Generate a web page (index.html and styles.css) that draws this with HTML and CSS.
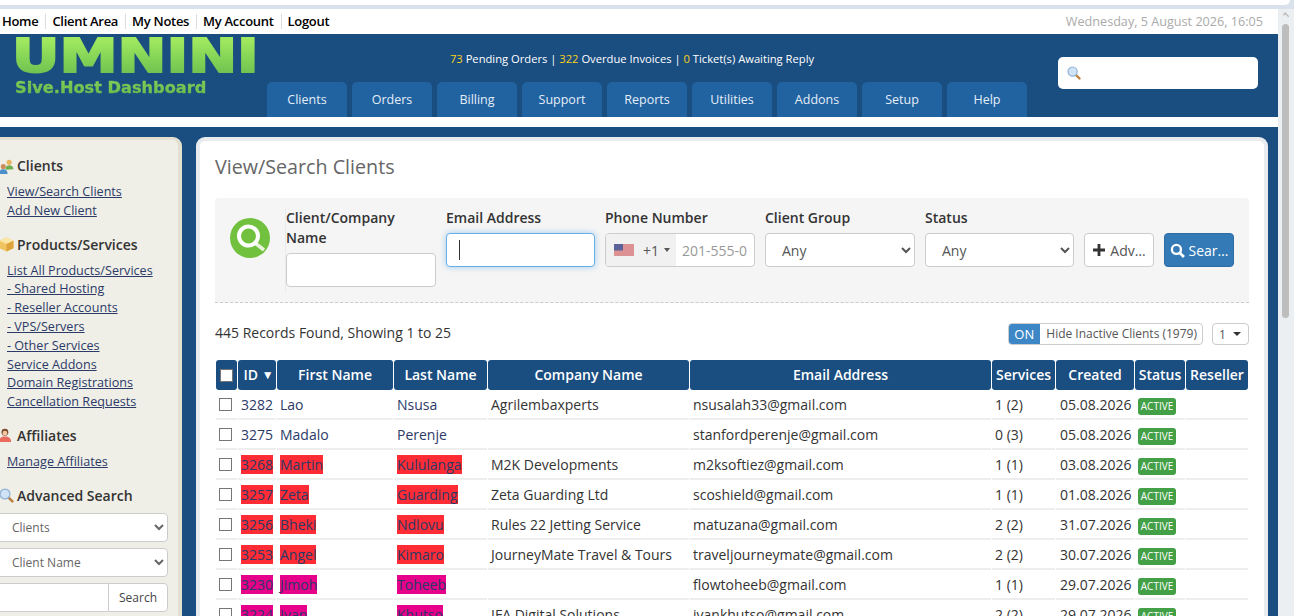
FILE: index.html
```html
<!DOCTYPE html>
<html lang="en">
<head>
  <meta charset="UTF-8">
  <title>View/Search Clients</title>
  <link rel="stylesheet" href="styles.css">
</head>
<body>

<div class="top-edge"><div class="top-edge-inner"></div></div>

<div class="window">
  <div class="page">

    <div class="topbar">
      <div class="topnav">
        <a href="#">Home</a>
        <a href="#">Client Area</a>
        <a href="#">My Notes</a>
        <a href="#">My Account</a>
        <a href="#">Logout</a>
      </div>
      <div class="date">Wednesday, 5 August 2026, 16:05</div>
    </div>

    <div class="header">
      <div class="logo">
        <div class="logo-big">UMNINI</div>
        <div class="logo-small">Sive.Host Dashboard</div>
      </div>
      <div class="head-mid">
        <div class="stats">
          <b>73</b> Pending Orders | <b>322</b> Overdue Invoices | <b>0</b> Ticket(s) Awaiting Reply
        </div>
        <div class="tabs">
          <a class="tab" href="#">Clients</a>
          <a class="tab" href="#">Orders</a>
          <a class="tab" href="#">Billing</a>
          <a class="tab" href="#">Support</a>
          <a class="tab" href="#">Reports</a>
          <a class="tab" href="#">Utilities</a>
          <a class="tab" href="#">Addons</a>
          <a class="tab" href="#">Setup</a>
          <a class="tab" href="#">Help</a>
        </div>
      </div>
      <div class="head-search">
        <svg class="icon-mag" viewBox="0 0 14 14">
          <path d="M8.5 8.5l4 4" stroke="#b9803f" stroke-width="2.4" stroke-linecap="round"/>
          <circle cx="5.6" cy="5.6" r="4.6" fill="#cfe2f6" stroke="#8fb2d6" stroke-width="1.2"/>
        </svg>
      </div>
    </div>

    <div class="content">
      <div class="sidebar">
        <h3 class="side-head">
          <svg class="side-icon" viewBox="0 0 14 14">
            <circle cx="9.5" cy="3" r="2.4" fill="#e9b35f"/>
            <path d="M6 10c0-3 1.4-4.2 3.5-4.2S13.5 7 13.5 9.5z" fill="#6fae4e"/>
            <circle cx="4" cy="7" r="2.4" fill="#c98d5a"/>
            <path d="M.2 14c0-3 1.4-4.4 3.8-4.4S8 11 8 14z" fill="#4d8fc9"/>
          </svg>
          Clients
        </h3>
        <a class="side-link" href="#">View/Search Clients</a>
        <a class="side-link" href="#">Add New Client</a>

        <h3 class="side-head">
          <svg class="side-icon" viewBox="0 0 14 14">
            <path d="M7 .5l6.500 3v7L7 13.500.5 10.500v-7z" fill="#f0c45e"/>
            <path d="M7 .5l6.500 3L7 6.500.5 3.500z" fill="#fbe6a6"/>
            <path d="M7 6.500v7l6.500-3v-7z" fill="#dfa33c"/>
          </svg>
          Products/Services
        </h3>
        <a class="side-link" href="#">List All Products/Services</a>
        <a class="side-link" href="#">- Shared Hosting</a>
        <a class="side-link" href="#">- Reseller Accounts</a>
        <a class="side-link" href="#">- VPS/Servers</a>
        <a class="side-link" href="#">- Other Services</a>
        <a class="side-link" href="#">Service Addons</a>
        <a class="side-link" href="#">Domain Registrations</a>
        <a class="side-link" href="#">Cancellation Requests</a>

        <h3 class="side-head">
          <svg class="side-icon" viewBox="0 0 14 14">
            <circle cx="5.500" cy="4" r="3.200" fill="#7a4a2a"/>
            <circle cx="5.500" cy="4.800" r="2.200" fill="#f2c6a0"/>
            <path d="M0 13c0-3.500 2-5 5.500-5s5.800 1.500 5.800 5z" fill="#ea6a5e"/>
          </svg>
          Affiliates
        </h3>
        <a class="side-link" href="#">Manage Affiliates</a>

        <h3 class="side-head">
          <svg class="side-icon" viewBox="0 0 14 14">
            <path d="M8.500 8.500l4 4" stroke="#b9803f" stroke-width="2.400" stroke-linecap="round"/>
            <circle cx="5.600" cy="5.600" r="4.600" fill="#cfe2f6" stroke="#8fb2d6" stroke-width="1.200"/>
          </svg>
          Advanced Search
        </h3>
        <div class="side-form">
          <select class="side-select"><option>Clients</option></select>
          <select class="side-select"><option>Client Name</option></select>
          <div class="side-group">
            <input class="side-input" type="text">
            <button class="side-btn">Search</button>
          </div>
        </div>
      </div>

      <div class="main">
        <h1 class="title">View/Search Clients</h1>

        <div class="filters">
          <div class="filter-icon">
            <svg viewBox="0 0 40 40" width="40" height="40">
              <circle cx="20" cy="20" r="20" fill="#72c13e"/>
              <path d="M25 25l9 7" stroke="#e8f5dc" stroke-width="3.500"/>
              <circle cx="18.500" cy="18" r="9.500" fill="#72c13e" stroke="#fff" stroke-width="4"/>
            </svg>
          </div>
          <div class="filter-fields">
            <div class="field">
              <label>Client/Company Name</label>
              <input class="control" type="text">
            </div>
            <div class="field field-narrow">
              <label>Email Address</label>
              <div class="focus-wrap">
                <input class="control focused" type="text">
                <span class="caret"></span>
              </div>
            </div>
            <div class="field">
              <label>Phone Number</label>
              <div class="phone">
                <div class="phone-code">
                  <svg class="flag" viewBox="0 0 20 12">
                    <rect width="20" height="12" fill="#e8b9b9"/>
                    <path d="M0 1h20M0 3h20M0 5h20M0 7h20M0 9h20M0 11h20" stroke="#cf6a6f" stroke-width="1"/>
                    <rect width="9" height="6.500" fill="#5a6299"/>
                  </svg>
                  <span>+1</span>
                  <i class="phone-arrow"></i>
                </div>
                <input class="phone-input" type="text" placeholder="201-555-0123">
              </div>
            </div>
            <div class="field">
              <label>Client Group</label>
              <select class="control"><option>Any</option></select>
            </div>
            <div class="field field-narrow">
              <label>Status</label>
              <select class="control"><option>Any</option></select>
            </div>
            <button class="btn">
              <svg viewBox="0 0 14 14" width="14" height="14"><path d="M7 1v12M1 7h12" stroke="#333" stroke-width="2.800"/></svg>
              Adv…
            </button>
            <button class="btn btn-primary">
              <svg viewBox="0 0 14 14" width="15" height="15">
                <circle cx="6" cy="6" r="4.200" fill="none" stroke="#fff" stroke-width="2.200"/>
                <path d="M9 9l4 4" stroke="#fff" stroke-width="2.600"/>
              </svg>
              Sear…
            </button>
          </div>
        </div>

        <div class="results-bar">
          <div class="results-count">445 Records Found, Showing 1 to 25</div>
          <div class="toggle"><span class="toggle-on">ON</span><span class="toggle-label">Hide Inactive Clients (1979)</span></div>
          <div class="pager">1 <i class="pager-arrow"></i></div>
        </div>

        <table class="clients">
          <colgroup>
            <col class="c-check"><col class="c-id"><col class="c-first"><col class="c-last"><col class="c-company">
            <col class="c-email"><col class="c-services"><col class="c-created"><col class="c-status"><col class="c-reseller">
          </colgroup>
          <thead>
            <tr>
              <th><input type="checkbox"></th>
              <th class="th-id">ID <span class="sort">▼</span></th>
              <th>First Name</th>
              <th>Last Name</th>
              <th>Company Name</th>
              <th>Email Address</th>
              <th>Services</th>
              <th>Created</th>
              <th>Status</th>
              <th>Reseller</th>
            </tr>
          </thead>
          <tbody>
            <tr>
              <td><input type="checkbox"></td>
              <td><a href="#">3282</a></td><td><a href="#">Lao</a></td><td><a href="#">Nsusa</a></td>
              <td>Agrilembaxperts</td><td><a class="mail" href="#">nsusalah33@gmail.com</a></td>
              <td>1 (2)</td><td class="created">05.08.2026</td><td><span class="badge">ACTIVE</span></td><td></td>
            </tr>
            <tr>
              <td><input type="checkbox"></td>
              <td><a href="#">3275</a></td><td><a href="#">Madalo</a></td><td><a href="#">Perenje</a></td>
              <td></td><td><a class="mail" href="#">stanfordperenje@gmail.com</a></td>
              <td>0 (3)</td><td class="created">05.08.2026</td><td><span class="badge">ACTIVE</span></td><td></td>
            </tr>
            <tr>
              <td><input type="checkbox"></td>
              <td><a class="flag-red" href="#">3268</a></td><td><a class="flag-red" href="#">Martin</a></td><td><a class="flag-red" href="#">Kululanga</a></td>
              <td>M2K Developments</td><td><a class="mail" href="#">m2ksoftiez@gmail.com</a></td>
              <td>1 (1)</td><td class="created">03.08.2026</td><td><span class="badge">ACTIVE</span></td><td></td>
            </tr>
            <tr>
              <td><input type="checkbox"></td>
              <td><a class="flag-red" href="#">3257</a></td><td><a class="flag-red" href="#">Zeta</a></td><td><a class="flag-red" href="#">Guarding</a></td>
              <td>Zeta Guarding Ltd</td><td><a class="mail" href="#">scoshield@gmail.com</a></td>
              <td>1 (1)</td><td class="created">01.08.2026</td><td><span class="badge">ACTIVE</span></td><td></td>
            </tr>
            <tr>
              <td><input type="checkbox"></td>
              <td><a class="flag-red" href="#">3256</a></td><td><a class="flag-red" href="#">Bheki</a></td><td><a class="flag-red" href="#">Ndlovu</a></td>
              <td>Rules 22 Jetting Service</td><td><a class="mail" href="#">matuzana@gmail.com</a></td>
              <td>2 (2)</td><td class="created">31.07.2026</td><td><span class="badge">ACTIVE</span></td><td></td>
            </tr>
            <tr>
              <td><input type="checkbox"></td>
              <td><a class="flag-red" href="#">3253</a></td><td><a class="flag-red" href="#">Angel</a></td><td><a class="flag-red" href="#">Kimaro</a></td>
              <td>JourneyMate Travel &amp; Tours</td><td><a class="mail" href="#">traveljourneymate@gmail.com</a></td>
              <td>2 (2)</td><td class="created">30.07.2026</td><td><span class="badge">ACTIVE</span></td><td></td>
            </tr>
            <tr>
              <td><input type="checkbox"></td>
              <td><a class="flag-pink" href="#">3230</a></td><td><a class="flag-pink" href="#">Jimoh</a></td><td><a class="flag-pink" href="#">Toheeb</a></td>
              <td></td><td><a class="mail" href="#">flowtoheeb@gmail.com</a></td>
              <td>1 (1)</td><td class="created">29.07.2026</td><td><span class="badge">ACTIVE</span></td><td></td>
            </tr>
            <tr>
              <td><input type="checkbox"></td>
              <td><a class="flag-pink" href="#">3224</a></td><td><a class="flag-pink" href="#">Ivan</a></td><td><a class="flag-pink" href="#">Khutso</a></td>
              <td>IFA Digital Solutions</td><td><a class="mail" href="#">ivankhutso@gmail.com</a></td>
              <td>2 (2)</td><td class="created">29.07.2026</td><td><span class="badge">ACTIVE</span></td><td></td>
            </tr>
          </tbody>
        </table>
      </div>
    </div>
  </div>

  <div class="scrollbar">
    <span class="scroll-up"></span>
    <div class="scroll-thumb"></div>
  </div>
</div>

</body>
</html>
```

FILE: styles.css
```css
* {
  box-sizing: border-box;
}

html, body {
  height: 100%;
  margin: 0;
  overflow: hidden;
}

body {
  font-family: "Open Sans", sans-serif;
  font-size: 14px;
  color: #333;
  background-color: #fff;
}

.top-edge {
  height: 9px;
  background-color: #d9e2ea;
}

.top-edge-inner {
  height: 5px;
  width: 1290px;
  background-color: #fff;
  border-bottom-right-radius: 6px;
}

.window {
  display: flex;
  height: 607px;
}

.page {
  width: 1278px;
  overflow: hidden;
}

/* scrollbar */
.scrollbar {
  width: 16px;
  background-color: #eceff1;
  padding: 4px 5px 0 4px;
}

.scroll-up {
  display: block;
  width: 8px;
  height: 5px;
  margin-bottom: 6px;
  border-top: 2px solid #bbb;
  border-left: 2px solid #bbb;
  transform: rotate(45deg) scale(0.7);
}

.scroll-thumb {
  height: 294px;
  border-radius: 4px;
  background-color: #bdbdbd;
}

/* top bar */
.topbar {
  display: flex;
  justify-content: space-between;
  align-items: center;
  height: 25px;
  padding: 0 15px 1px 2px;
}

.topnav {
  display: flex;
}

.topnav a {
  color: #000;
  font-size: 13px;
  font-weight: 600;
  letter-spacing: -0.3px;
  line-height: 15px;
  text-decoration: none;
  padding-right: 7px;
  margin-right: 6px;
  border-right: 1px solid #ddd;
}

.topnav a:last-child {
  border-right: none;
}

.date {
  color: #aaa;
  font-size: 12.630px;
}

/* header */
.header {
  display: flex;
  height: 83px;
  background-color: #1a4d80;
}

.logo {
  width: 267px;
  padding: 0 0 0 15px;
  overflow: hidden;
}

.logo-big, .logo-small {
  font-family: "DejaVu Sans", sans-serif;
  font-weight: bold;
  color: transparent;
  background-clip: text;
  -webkit-background-clip: text;
  white-space: nowrap;
}

.logo-big {
  width: 200px;
  height: 44px;
  margin-left: -3px;
  font-size: 46px;
  line-height: 44px;
  -webkit-text-stroke: 2px transparent;
  background-image: linear-gradient(#9fe85f, #9fe85f 15%, #6cc04f 95%);
  transform: scaleX(1.270);
  transform-origin: left;
}

.logo-small {
  width: 210px;
  font-size: 16.200px;
  line-height: 20px;
  -webkit-text-stroke: 0.4px transparent;
  background-image: linear-gradient(#86d058, #63b84b);
}

.head-mid {
  display: flex;
  flex-direction: column;
  justify-content: space-between;
  width: 791px;
}

.stats {
  width: 730px;
  padding-top: 17px;
  text-align: center;
  color: #fff;
  font-size: 11.200px;
  line-height: 16px;
}

.stats b {
  color: #f7d020;
  font-weight: 400;
}

.tabs {
  display: flex;
  gap: 5px;
}

.tab {
  width: 80px;
  height: 35px;
  line-height: 35px;
  text-align: center;
  font-size: 12.500px;
  color: #e4eef7;
  text-decoration: none;
  background-color: #2162a1;
  border-radius: 5px 5px 0 0;
}

.head-search {
  width: 200px;
  height: 32px;
  margin-top: 23px;
  padding: 9px;
  background-color: #fff;
  border-radius: 5px;
}

.icon-mag {
  display: block;
  width: 14px;
  height: 14px;
}

/* content */
.content {
  display: flex;
  height: 499px;
  margin-top: 10px;
  padding-top: 10px;
  background-color: #1a4d80;
  overflow: hidden;
}

.sidebar {
  flex: none;
  width: 192px;
  height: 600px;
  margin-left: -10px;
  padding: 16px 0 0 17px;
  background-color: #f0efe7;
  border-top: 3px solid #e3e0d1;
  border-right: 4px solid #e3e0d1;
  border-top-right-radius: 9px;
}

.side-head {
  display: flex;
  align-items: center;
  gap: 3px;
  margin: 14px 0 7px -8px;
  font-size: 14px;
  font-weight: 600;
  line-height: 20px;
  color: #333;
}

.side-head:first-child {
  margin-top: 0;
}

.side-icon {
  flex: none;
  width: 15px;
  height: 15px;
}

.side-link {
  display: block;
  font-size: 12.600px;
  line-height: 18.800px;
  color: #2b3a67;
}

.side-form {
  display: flex;
  flex-direction: column;
  gap: 6px;
  margin: 0 10px 0 -22px;
}

.side-select {
  height: 29px;
  padding-left: 22px;
  font-family: inherit;
  font-size: 12px;
  color: #666;
  background-color: #fff;
  border: 1px solid #ccc;
  border-radius: 4px;
}

.side-group {
  display: flex;
  height: 29px;
}

.side-input {
  flex: 1;
  min-width: 0;
  background-color: #fff;
  border: 1px solid #ccc;
  border-right: none;
  border-radius: 4px 0 0 4px;
}

.side-btn {
  width: 60px;
  padding: 0;
  font-family: inherit;
  font-size: 12px;
  color: #444;
  background-color: #fff;
  border: 1px solid #ccc;
  border-radius: 0 4px 4px 0;
}

/* main panel */
.main {
  flex: none;
  width: 1072px;
  height: 600px;
  margin-left: 14px;
  padding: 12px 15px 0;
  background-color: #fff;
  border: 4px solid #e8ecef;
  border-bottom: none;
  border-radius: 9px 9px 0 0;
}

.title {
  margin: 0 0 17px;
  font-size: 19.700px;
  font-weight: 400;
  line-height: 28px;
  color: #666;
}

.filters {
  display: flex;
  height: 105px;
  padding: 10px 15px 0;
  background-color: #f5f5f5;
  border-bottom: 1px dashed #ccc;
  border-radius: 4px 4px 0 0;
}

.filter-icon {
  flex: none;
  width: 40px;
  padding-top: 10px;
}

.filter-fields {
  display: flex;
  gap: 10px;
  height: 84px;
  margin-left: 15px;
  border-left: 1px solid #eaeaea;
}

.field {
  flex: none;
  width: 150px;
}

.field-narrow {
  width: 149px;
}

.field label {
  display: block;
  margin-bottom: 5px;
  font-size: 14px;
  font-weight: 600;
  line-height: 20px;
  color: #333;
}

.control {
  display: block;
  width: 100%;
  height: 34px;
  padding: 0 0 0 12px;
  font-family: inherit;
  font-size: 14px;
  color: #555;
  background-color: #fff;
  border: 1px solid #ccc;
  border-radius: 4px;
}

.control.focused {
  border-color: #66afe9;
  box-shadow: 0 0 6px rgba(102, 175, 233, 0.6);
}

.focus-wrap {
  position: relative;
}

.caret {
  position: absolute;
  top: 7px;
  left: 13px;
  width: 1px;
  height: 20px;
  background-color: #333;
}

.phone {
  display: flex;
  height: 34px;
  background-color: #fff;
  border: 1px solid #ccc;
  border-radius: 4px;
  overflow: hidden;
}

.phone-code {
  display: flex;
  align-items: center;
  flex: none;
  width: 70px;
  padding-left: 8px;
  color: #555;
  background-color: #f1f1f1;
}

.flag {
  width: 20px;
  height: 12px;
  margin-right: 9px;
}

.phone-arrow {
  margin-left: 5px;
  border-top: 4px solid #555;
  border-left: 3px solid transparent;
  border-right: 3px solid transparent;
}

.phone-input {
  flex: 1;
  min-width: 0;
  padding: 0 6px;
  font-family: inherit;
  font-size: 14px;
  background: none;
  border: none;
}

.phone-input::placeholder {
  color: #999;
}

.btn {
  flex: none;
  display: flex;
  align-items: center;
  justify-content: center;
  gap: 4px;
  width: 70px;
  height: 34px;
  margin-top: 25px;
  padding: 0;
  font-family: inherit;
  font-size: 14px;
  color: #555;
  background-color: #fff;
  border: 1px solid #ccc;
  border-radius: 4px;
}

.btn-primary {
  color: #fff;
  background-color: #337ab7;
  border-color: #2e6da4;
}

.results-bar {
  display: flex;
  align-items: center;
  height: 22px;
  margin-top: 20px;
}

.results-count {
  flex: 1;
  padding-bottom: 4px;
  font-size: 14px;
  color: #333;
}

.toggle {
  display: flex;
  height: 22px;
  font-size: 12px;
  line-height: 20px;
  color: #555;
  border: 1px solid #ccc;
  border-radius: 4px;
  overflow: hidden;
}

.toggle-on {
  width: 32px;
  margin: -1px 0 -1px -1px;
  line-height: 22px;
  text-align: center;
  font-size: 13px;
  color: #fff;
  background-color: #3d87c7;
}

.toggle-label {
  padding: 0 5px 0 6px;
}

.pager {
  display: flex;
  align-items: center;
  gap: 7px;
  width: 37px;
  height: 22px;
  margin-left: 9px;
  padding-left: 6px;
  font-size: 12px;
  color: #555;
  border: 1px solid #ccc;
  border-radius: 4px;
}

.pager-arrow {
  border-top: 4px solid #333;
  border-left: 4px solid transparent;
  border-right: 4px solid transparent;
}

/* clients table */
.clients {
  width: 1034px;
  margin-top: 15px;
  table-layout: fixed;
  border-collapse: separate;
  border-spacing: 1px 0;
}

.c-check { width: 21px; }
.c-id { width: 38px; }
.c-first { width: 116px; }
.c-last { width: 93px; }
.c-company { width: 201px; }
.c-email { width: 301px; }
.c-services { width: 63px; }
.c-created { width: 78px; }
.c-status { width: 50px; }
.c-reseller { width: 62px; }

.clients th {
  height: 30px;
  padding: 0 0 2px;
  font-size: 14px;
  font-weight: 600;
  text-align: center;
  white-space: nowrap;
  color: #fff;
  background-color: #1a4d80;
  border-radius: 3px;
}

.clients th.th-id {
  padding-left: 3px;
}

.clients td {
  height: 30px;
  padding: 0 0 0 3px;
  font-size: 14px;
  white-space: nowrap;
  overflow: hidden;
  border-bottom: 2px solid #eee;
}

.clients input[type="checkbox"] {
  display: block;
  width: 13px;
  height: 13px;
  margin: 0;
  appearance: none;
  background-color: #fff;
  border: 1px solid #767676;
}

.clients th input[type="checkbox"] {
  margin: 2px 0 0 4px;
}

.clients a {
  color: #2b3a67;
  text-decoration: none;
}

.clients a.mail {
  color: #333;
}

.sort {
  font-size: 12px;
  vertical-align: 1px;
}

.created {
  padding-left: 4px !important;
}

.flag-red {
  background-color: #ff2c35;
}

.flag-pink {
  background-color: #e6008a;
}

.badge {
  display: inline-block;
  width: 38px;
  height: 17px;
  line-height: 17px;
  margin-top: 5px;
  text-align: center;
  font-size: 10px;
  color: #fff;
  background-color: #43a047;
  border-radius: 3px;
}
```
